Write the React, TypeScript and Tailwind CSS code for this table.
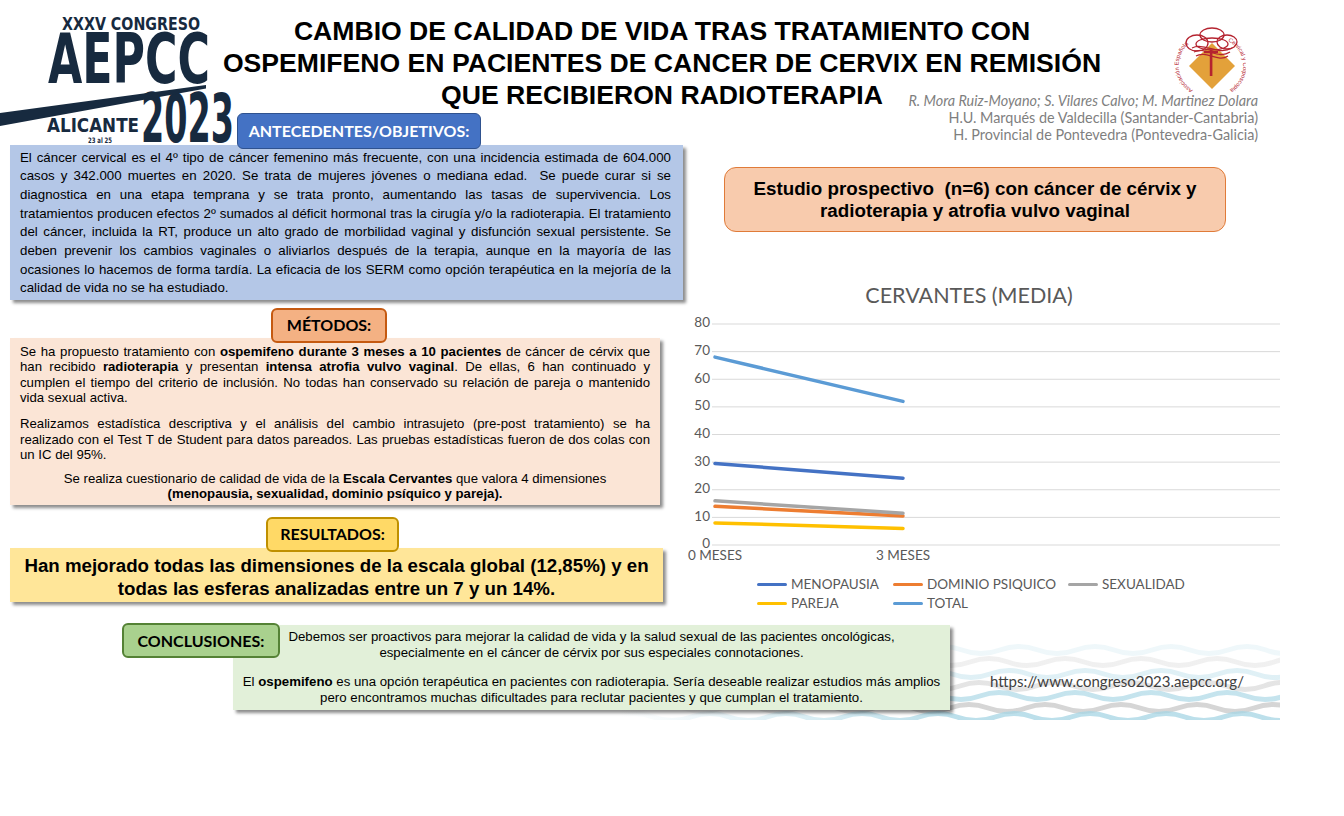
import React from 'react';

const shadow = 'shadow-[3px_3px_3px_rgba(0,0,0,0.45)]';

function CongresoLogo() {
  return (
    <svg width="240" height="148" viewBox="0 0 240 148" className="block overflow-visible">
      <g fill="#172a3f" fontFamily="'DejaVu Sans', 'Liberation Sans', sans-serif" fontWeight="bold">
        <text x="62" y="30" fontSize="18" textLength="138" lengthAdjust="spacingAndGlyphs">XXXV CONGRESO</text>
        <text x="48" y="83" fontSize="70" textLength="162" lengthAdjust="spacingAndGlyphs">AEPCC</text>
        <text x="47" y="132" fontSize="20" textLength="92" lengthAdjust="spacingAndGlyphs">ALICANTE</text>
        <text x="141" y="142" fontSize="68" textLength="93" lengthAdjust="spacingAndGlyphs">2023</text>
        <text x="88" y="143" fontSize="7.5" textLength="24" lengthAdjust="spacingAndGlyphs">23 al 25</text>
      </g>
      <polygon points="0,113 206,85 206,88.5 0,126" fill="#172a3f" />
    </svg>
  );
}

function SocietyLogo() {
  const red = '#b5232f';
  return (
    <svg width="80" height="70" viewBox="0 0 80 70" className="block mt-[22px] mr-[12px]">
      <defs>
        <path id="ringLeft" d="M 27 68 A 28 28 0 0 1 24 21" />
        <path id="ringRight" d="M 62 19 A 28 28 0 0 1 65 67" />
      </defs>
      <polygon points="46,21 69,44 46,67 23,44" fill="#e3a13a" />
      <g fill="none" stroke={red} strokeWidth="1.3">
        <ellipse cx="46" cy="13" rx="12" ry="7" />
        <ellipse cx="31" cy="21" rx="11" ry="8" />
        <ellipse cx="61" cy="20" rx="10" ry="7" />
        <ellipse cx="46" cy="22" rx="16" ry="6" />
        <path d="M 26 26 C 38 20, 52 34, 66 26" />
        <path d="M 28 30 C 40 24, 52 38, 64 30" />
        <path d="M 30 34 C 40 28, 52 41, 62 34" />
      </g>
      <rect x="43.8" y="28" width="2.6" height="26" fill={red} />
      <rect x="38" y="29" width="14" height="2.2" fill={red} />
      <g fontSize="5.8" fill={red} fontFamily="'Liberation Sans', Arial, sans-serif">
        <text>
          <textPath href="#ringLeft">Asociación Española</textPath>
        </text>
        <text>
          <textPath href="#ringRight">Cervical y Colposcopia</textPath>
        </text>
      </g>
    </svg>
  );
}

function wavePath(y: number, amp: number, len: number, width: number, phase: number) {
  let d = `M ${-phase} ${y}`;
  const n = Math.ceil((width + phase) / (len / 2)) + 1;
  for (let i = 0; i < n; i++) d += ` q ${len / 4} ${i % 2 === 0 ? -amp * 2 : amp * 2} ${len / 2} 0`;
  return d;
}

const waves = [
  { y: 22, color: 'url(#waveBlue)', op: 0.18, phase: 0 },
  { y: 34, color: 'url(#waveGray)', op: 0.25, phase: 30 },
  { y: 46, color: 'url(#waveBlue)', op: 0.35, phase: 10 },
  { y: 58, color: 'url(#waveGray)', op: 0.45, phase: 40 },
  { y: 68, color: 'url(#waveBlue)', op: 0.65, phase: 20 },
  { y: 80, color: 'url(#waveGray)', op: 0.7, phase: 50 },
  { y: 89, color: 'url(#waveBlue)', op: 0.75, phase: 5 },
];

function Waves() {
  return (
    <svg width="660" height="92" viewBox="0 0 660 92" className="absolute left-[620px] top-[5px]">
      <defs>
        <linearGradient id="waveBlue" x1="0" y1="0" x2="660" y2="0" gradientUnits="userSpaceOnUse">
          <stop offset="0" stopColor="#a6d5e4" stopOpacity="0" />
          <stop offset="0.5" stopColor="#a6d5e4" stopOpacity="1" />
          <stop offset="1" stopColor="#a6d5e4" stopOpacity="1" />
        </linearGradient>
        <linearGradient id="waveGray" x1="0" y1="0" x2="660" y2="0" gradientUnits="userSpaceOnUse">
          <stop offset="0" stopColor="#c4c4c4" stopOpacity="0" />
          <stop offset="0.5" stopColor="#c4c4c4" stopOpacity="1" />
          <stop offset="1" stopColor="#c4c4c4" stopOpacity="1" />
        </linearGradient>
      </defs>
      {waves.map((w, i) => (
        <path key={i} d={wavePath(w.y, 3.5, 76, 660, w.phase)} fill="none" stroke={w.color} strokeWidth="5" opacity={w.op} />
      ))}
    </svg>
  );
}

const series = [
  { name: 'MENOPAUSIA', color: '#4472c4', v: [29.5, 24.2] },
  { name: 'DOMINIO PSIQUICO', color: '#ed7d31', v: [14, 10.5] },
  { name: 'SEXUALIDAD', color: '#a5a5a5', v: [16, 11.5] },
  { name: 'PAREJA', color: '#ffc000', v: [8, 6] },
  { name: 'TOTAL', color: '#5b9bd5', v: [68, 52] },
];

const yOf = (v: number) => 233 - (v * 221) / 80;
const xs = [32, 220];

function Chart() {
  return (
    <svg width="597" height="256" viewBox="0 0 597 256" className="block mt-[5px]">
      <g fontFamily="Lato, sans-serif" fontSize="13.5" fill="#595959">
        {[0, 10, 20, 30, 40, 50, 60, 70, 80].map((v) => (
          <g key={v}>
            <line x1="29" x2="597" y1={yOf(v)} y2={yOf(v)} stroke="#d9d9d9" strokeWidth="1" />
            <text x="27" y={yOf(v)} textAnchor="end" dominantBaseline="middle">{v}</text>
          </g>
        ))}
        <text x={xs[0]} y="245" textAnchor="middle" dominantBaseline="middle">0 MESES</text>
        <text x={xs[1]} y="245" textAnchor="middle" dominantBaseline="middle">3 MESES</text>
      </g>
      {series.map((s) => (
        <line key={s.name} x1={xs[0]} y1={yOf(s.v[0])} x2={xs[1]} y2={yOf(s.v[1])} stroke={s.color} strokeWidth="3.5" strokeLinecap="round" />
      ))}
    </svg>
  );
}

function Row({ children, end }: { children: React.ReactNode; end?: boolean }) {
  return <div className={end ? 'whitespace-nowrap' : 'text-justify [text-align-last:justify]'}>{children}</div>;
}

export default function App() {
  return (
    <div className="w-[1344px] h-[816px] bg-white overflow-hidden text-black font-['Liberation_Sans',Arial,sans-serif]">
      <div className="w-[1280px]">
        <header className="grid grid-cols-[222px_880px_178px] h-[113px]">
          <div>
            <CongresoLogo />
          </div>
          <h1 className="pt-[15px] text-center text-[26.6px] leading-[32px] font-bold whitespace-nowrap">
            CAMBIO DE CALIDAD DE VIDA TRAS TRATAMIENTO CON
            <br />
            OSPEMIFENO EN PACIENTES DE CANCER DE CERVIX EN REMISIÓN
            <br />
            QUE RECIBIERON RADIOTERAPIA
          </h1>
          <div className="flex flex-col items-end pr-[22px]">
            <SocietyLogo />
            <div className="flex flex-col items-end font-['Lato',sans-serif] text-[14.4px] leading-[17px] text-[#7f7f7f] whitespace-nowrap">
              <p className="italic">R. Mora Ruiz-Moyano; S. Vilares Calvo; M. Martinez Dolara</p>
              <p>H.U. Marqués de Valdecilla (Santander-Cantabria)</p>
              <p>H. Provincial de Pontevedra (Pontevedra-Galicia)</p>
            </div>
          </div>
        </header>

        <div className="flex h-[510px]">
          <div className="w-[683px] pl-[10px] flex flex-col items-start">
            <div className="relative z-10 ml-[227px] w-[244px] h-[36px] rounded-[6px] bg-[#4472c4] border-[1.5px] border-[#2f528f] flex items-center justify-center text-white font-['Lato',sans-serif] font-bold text-[16px]">
              ANTECEDENTES/OBJETIVOS:
            </div>
            <div className={`-mt-[4px] w-[673px] bg-[#b4c7e7] pt-[3.5px] pb-[1.5px] pl-[10px] pr-[12px] text-[13.3px] leading-[18.7px] ${shadow}`}>
              <Row>El cáncer cervical es el 4º tipo de cáncer femenino más frecuente, con una incidencia estimada de 604.000</Row>
              <Row>casos y 342.000 muertes en 2020. Se trata de mujeres jóvenes o mediana edad.{'\u00a0'} Se puede curar si se</Row>
              <Row>diagnostica en una etapa temprana y se trata pronto, aumentando las tasas de supervivencia. Los</Row>
              <Row>tratamientos producen efectos 2º sumados al déficit hormonal tras la cirugía y/o la radioterapia. El tratamiento</Row>
              <Row>del cáncer, incluida la RT, produce un alto grado de morbilidad vaginal y disfunción sexual persistente. Se</Row>
              <Row>deben prevenir los cambios vaginales o aliviarlos después de la terapia, aunque en la mayoría de las</Row>
              <Row>ocasiones lo hacemos de forma tardía. La eficacia de los SERM como opción terapéutica en la mejoría de la</Row>
              <Row end>calidad de vida no se ha estudiado.</Row>
            </div>

            <div className="relative z-10 mt-[8px] ml-[261px] w-[116px] h-[35px] rounded-[6px] bg-[#f4b183] border-2 border-[#c55a11] flex items-center justify-center font-['Lato',sans-serif] font-bold text-[16px]">
              MÉTODOS:
            </div>
            <div className={`-mt-[5px] w-[650px] bg-[#fbe5d6] pt-[6px] pb-[2.6px] px-[10px] text-[13.2px] leading-[15.6px] ${shadow}`}>
              <div>
                <Row>
                  Se ha propuesto tratamiento con <b>ospemifeno durante 3 meses a 10 pacientes</b> de cáncer de cérvix que
                </Row>
                <Row>
                  han recibido <b>radioterapia</b> y presentan <b>intensa atrofia vulvo vaginal</b>. De ellas, 6 han continuado y
                </Row>
                <Row>cumplen el tiempo del criterio de inclusión. No todas han conservado su relación de pareja o mantenido</Row>
                <Row end>vida sexual activa.</Row>
              </div>
              <div className="mt-[10px]">
                <Row>Realizamos estadística descriptiva y el análisis del cambio intrasujeto (pre-post tratamiento) se ha</Row>
                <Row>realizado con el Test T de Student para datos pareados. Las pruebas estadísticas fueron de dos colas con</Row>
                <Row end>un IC del 95%.</Row>
              </div>
              <div className="mt-[8px] text-center">
                <p>
                  Se realiza cuestionario de calidad de vida de la <b>Escala Cervantes</b> que valora 4 dimensiones
                </p>
                <p className="font-bold">(menopausia, sexualidad, dominio psíquico y pareja).</p>
              </div>
            </div>

            <div className="relative z-10 mt-[12px] ml-[256px] w-[133px] h-[35px] rounded-[6px] bg-[#ffd966] border-2 border-[#bf9000] flex items-center justify-center font-['Lato',sans-serif] font-bold text-[16px]">
              RESULTADOS:
            </div>
            <div className={`-mt-[4px] w-[653px] bg-[#ffe699] pt-[6px] pb-[2px] text-center font-bold text-[18.7px] leading-[23px] ${shadow}`}>
              Han mejorado todas las dimensiones de la escala global (12,85%) y en
              <br />
              todas las esferas analizadas entre un 7 y un 14%.
            </div>
          </div>

          <div className="w-[597px] flex flex-col">
            <div className="mt-[54px] ml-[41px] w-[502px] h-[65px] rounded-[12px] bg-[#f8cbad] border-[1.5px] border-[#e07b39] flex items-center justify-center text-center font-bold text-[18.8px] leading-[22px]">
              <p>
                Estudio prospectivo{'\u00a0'} (n=6) con cáncer de cérvix y
                <br />
                radioterapia y atrofia vulvo vaginal
              </p>
            </div>
            <h2 className="mt-[51px] pr-[25px] text-center font-['Lato',sans-serif] text-[21.5px] leading-[24px] text-[#595959]">
              CERVANTES (MEDIA)
            </h2>
            <Chart />
            <div className="mt-[7px] ml-[74px] grid grid-cols-[136px_175px_auto] font-['Lato',sans-serif] text-[13.5px] leading-[19px] text-[#595959]">
              {series.map((s) => (
                <div key={s.name} className="flex items-center gap-[4px]">
                  <span className="w-[30px] h-[3.5px] rounded-full" style={{ backgroundColor: s.color }} />
                  <span>{s.name}</span>
                </div>
              ))}
            </div>
          </div>
        </div>

        <div className="relative flex items-start h-[97px]">
          <Waves />
          <div className="relative z-20 ml-[122px] w-[158px] h-[35px] rounded-[6px] bg-[#a9d18e] border-2 border-[#548235] flex items-center justify-center font-['Lato',sans-serif] font-bold text-[16px]">
            CONCLUSIONES:
          </div>
          <div className={`relative z-10 -ml-[47px] mt-[2px] w-[717px] h-[85px] bg-[#e2f0d9] pt-[4px] text-center text-[13.25px] leading-[16px] whitespace-nowrap ${shadow}`}>
            <p>Debemos ser proactivos para mejorar la calidad de vida y la salud sexual de las pacientes oncológicas,</p>
            <p>especialmente en el cáncer de cérvix por sus especiales connotaciones.</p>
            <p className="mt-[13px]">
              El <b>ospemifeno</b> es una opción terapéutica en pacientes con radioterapia. Sería deseable realizar estudios más amplios
            </p>
            <p>pero encontramos muchas dificultades para reclutar pacientes y que cumplan el tratamiento.</p>
          </div>
          <p className="relative z-10 ml-[40px] mt-[50px] font-['Lato',sans-serif] text-[15px] leading-[17px] text-[#404040] whitespace-nowrap">
            https://www.congreso2023.aepcc.org/
          </p>
        </div>
      </div>
    </div>
  );
}
